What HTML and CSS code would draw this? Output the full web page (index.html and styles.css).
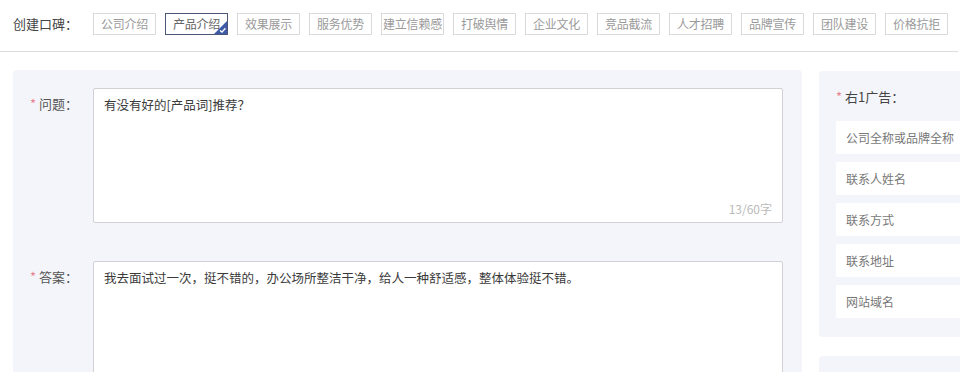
FILE: index.html
```html
<!DOCTYPE html>
<html lang="zh-CN">

<head>
  <meta charset="UTF-8">
  <meta name="viewport" content="width=device-width, initial-scale=1.0">
  <title>创建口碑</title>
  <link rel="stylesheet" href="styles.css">
</head>

<body>
  <div class="topbar">
    <span class="topbar_label">创建口碑：</span>
    <ul class="tags">
      <li class="tag">公司介绍</li>
      <li class="tag tag_active">产品介绍
        <svg class="tag_check" width="13" height="13" viewBox="0 0 13 13">
          <polygon points="13,0 13,13 0,13" fill="#3d5aa6" />
          <path d="M6 9.4 L8 11.1 L11.4 7.2" fill="none" stroke="#fff" stroke-width="1.3" />
        </svg>
      </li>
      <li class="tag">效果展示</li>
      <li class="tag">服务优势</li>
      <li class="tag">建立信赖感</li>
      <li class="tag">打破舆情</li>
      <li class="tag">企业文化</li>
      <li class="tag">竞品截流</li>
      <li class="tag">人才招聘</li>
      <li class="tag">品牌宣传</li>
      <li class="tag">团队建设</li>
      <li class="tag">价格抗拒</li>
    </ul>
  </div>

  <div class="main">
    <div class="editor">
      <div class="form_row">
        <label class="form_label"><i>*</i>问题：</label>
        <div class="area_wrap">
          <textarea class="area area_question">有没有好的[产品词]推荐？</textarea>
          <span class="area_count">13/60字</span>
        </div>
      </div>
      <div class="form_row">
        <label class="form_label"><i>*</i>答案：</label>
        <div class="area_wrap">
          <textarea class="area area_answer">我去面试过一次，挺不错的，办公场所整洁干净，给人一种舒适感，整体体验挺不错。</textarea>
        </div>
      </div>
    </div>

    <div class="side">
      <div class="ad_panel">
        <div class="ad_label"><i>*</i>右1广告：</div>
        <div class="ad_input">公司全称或品牌全称</div>
        <div class="ad_input">联系人姓名</div>
        <div class="ad_input">联系方式</div>
        <div class="ad_input">联系地址</div>
        <div class="ad_input">网站域名</div>
      </div>
      <div class="ad_panel ad_panel_next"></div>
    </div>
  </div>
</body>

</html>
```

FILE: styles.css
```css
* {
  box-sizing: border-box;
}

body {
  margin: 0;
  width: 960px;
  height: 372px;
  overflow: hidden;
  font-family: "Noto Sans CJK SC", "Noto Sans", sans-serif;
  font-size: 13px;
  color: #333;
  background-color: #fff;
}

i {
  font-style: normal;
  color: #e8828f;
  margin-right: 3px;
}

/* top tag bar */
.topbar {
  display: flex;
  align-items: center;
  padding: 13px 0 16px 13px;
  border-bottom: 1px solid #dcdcdc;
  width: 958px;
}

.topbar_label {
  color: #444;
  line-height: 22px;
  margin-right: 15px;
}

.tags {
  display: flex;
  gap: 9px;
  list-style: none;
  margin: 0;
  padding: 0;
}

.tag {
  position: relative;
  width: 63px;
  height: 22px;
  line-height: 20px;
  border: 1px solid #dadada;
  color: #9a9a9a;
  font-size: 12px;
  text-align: center;
  white-space: nowrap;
  overflow: hidden;
  letter-spacing: -0.2px;
}

.tag_active {
  border-color: #4d5677;
  color: #666;
}

.tag_check {
  position: absolute;
  right: 0;
  bottom: 0;
}

/* content */
.main {
  display: flex;
  gap: 17px;
  height: 320px;
  overflow: hidden;
  padding: 18px 0 0 13px;
}

.editor {
  width: 789px;
  height: 320px;
  flex-shrink: 0;
  background-color: #f4f5fa;
  border-radius: 4px;
  padding: 18px 19px 0 17px;
  display: flex;
  flex-direction: column;
  gap: 38px;
}

.form_row {
  display: flex;
}

.form_label {
  width: 63px;
  flex-shrink: 0;
  padding-top: 6px;
  line-height: 20px;
  color: #555;
}

.area_wrap {
  position: relative;
  width: 690px;
}

.area {
  display: block;
  width: 100%;
  resize: none;
  border: 1px solid #d2d2d6;
  border-radius: 2px;
  padding: 6px 10px;
  font-family: inherit;
  font-size: 12.5px;
  line-height: 20px;
  color: #3a3a3a;
  background-color: #fff;
  outline: none;
}

.area_question {
  height: 135px;
}

.area_answer {
  height: 135px;
}

.area_count {
  position: absolute;
  right: 11px;
  bottom: 7px;
  font-size: 12px;
  line-height: 14px;
  color: #bbb;
}

/* right ads */
.side {
  display: flex;
  flex-direction: column;
  gap: 19px;
  width: 230px;
  flex-shrink: 0;
  padding-top: 1px;
}

.ad_panel {
  background-color: #f4f5fa;
  border-radius: 4px;
  padding: 16px 0 19px 17px;
}

.ad_panel_next {
  height: 40px;
}

.ad_label {
  line-height: 20px;
  color: #444;
  margin-bottom: 14px;
}

.ad_input {
  height: 33px;
  line-height: 33px;
  margin-bottom: 8px;
  padding-left: 10px;
  background-color: #fff;
  border-radius: 2px;
  font-size: 12px;
  color: #777;
  white-space: nowrap;
}

.ad_input:last-child {
  margin-bottom: 0;
}
```
